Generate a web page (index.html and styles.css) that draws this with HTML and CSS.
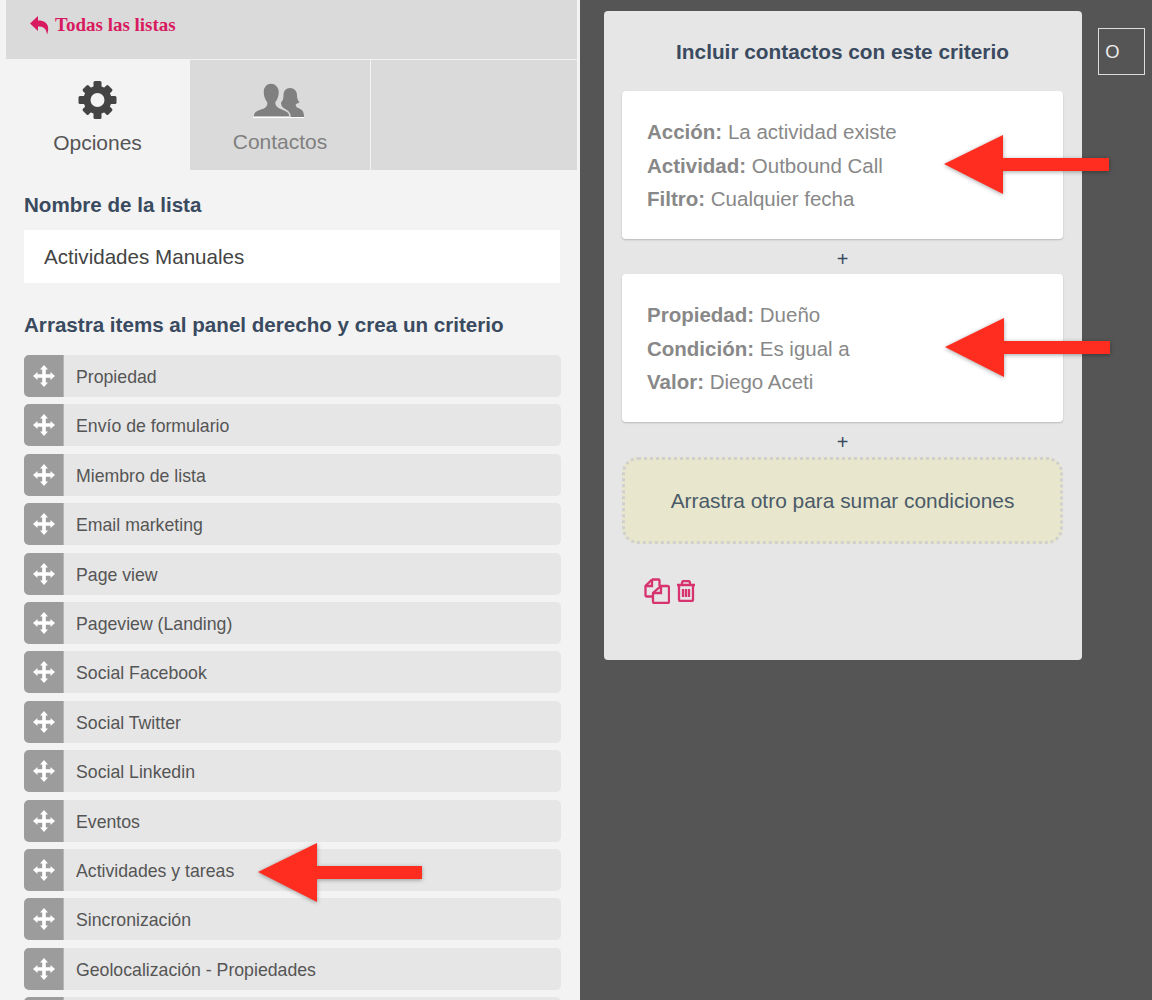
FILE: index.html
```html
<!DOCTYPE html>
<html lang="en">
<head>
    <meta charset="UTF-8">
    <meta name="viewport" content="width=device-width, initial-scale=1.0">
    <title>Actividades Manuales</title>
    <link rel="stylesheet" href="styles.css">
</head>
<body>
    <svg class="icon-defs">
        <symbol id="move" viewBox="0 0 22 22"><path d="M11 0 L15 4.500 H12.800 V9.200 H17.500 V7 L22 11 L17.500 15 V12.800 H12.800 V17.500 H15 L11 22 L7 17.500 H9.200 V12.800 H4.500 V15 L0 11 L4.500 7 V9.200 H9.200 V4.500 H7 Z"/></symbol>
    </svg>

    <div class="left-panel">
        <div class="back-bar">
            <a class="back-link" href="#">
                <svg class="back-icon" viewBox="0 0 20 20"><path d="M8 1 L0 8.500 L8 16 V11.500 C13 11.500 16 12.500 17 19.500 C20.500 10 16 5.500 8 5.500 Z"/></svg>
                Todas las listas
            </a>
        </div>

        <div class="tabs">
            <div class="tab active">
                <svg class="tab-icon gear" viewBox="0 0 38 38">
                    <g fill="#444">
                        <rect x="15" y="0" width="8" height="38" rx="1.500"/>
                        <rect x="0" y="15" width="38" height="8" rx="1.500"/>
                        <rect x="15" y="1" width="8" height="36" rx="1.500" transform="rotate(45 19 19)"/>
                        <rect x="15" y="1" width="8" height="36" rx="1.500" transform="rotate(-45 19 19)"/>
                    </g>
                    <circle cx="19" cy="19" r="10.500" fill="none" stroke="#444" stroke-width="7"/>
                    <circle cx="19" cy="19" r="7" fill="#f3f3f3"/>
                </svg>
                <span>Opciones</span>
            </div>
            <div class="tab">
                <svg class="tab-icon people" viewBox="0 0 51 35">
                    <path fill="#808080" d="M37 5 C33 5 30.500 8 30.500 12 C30.500 15 30 18 28 19.500 C28 22 29 24 31 25.200 L35 28 L37 34 H51 C51 28 49 26.500 45 25 C42.500 24 42.500 22 43 21 C45 20.500 46 19.500 46.500 19 C44.500 17.500 44 15 44 12 C44 8 41 5 37 5 Z"/>
                    <path fill="#808080" stroke="#dadada" stroke-width="1.500" d="M18 0 C13 0 10 4 10 9 C10 13 11.500 17 13.500 19.500 C14 22 13 23.500 10 25 C4 27 0 28 0 34 H37 C37 29.500 35 28 28.500 25.500 C24 24 23 22.500 23 19.500 C25 17 26.500 13 26.500 9 C26.500 4 23 0 18 0 Z"/>
                    <rect x="0" y="34" width="51" height="1" fill="#fff"/>
                </svg>
                <span>Contactos</span>
            </div>
            <div class="tab"></div>
        </div>

        <div class="options">
            <h3 class="section-title">Nombre de la lista</h3>
            <div class="name-input">Actividades Manuales</div>
            <h3 class="section-title drag-title">Arrastra items al panel derecho y crea un criterio</h3>

            <div class="drag-list">
                <div class="drag-item"><span class="handle"><svg><use href="#move"/></svg></span>Propiedad</div>
                <div class="drag-item"><span class="handle"><svg><use href="#move"/></svg></span>Envío de formulario</div>
                <div class="drag-item"><span class="handle"><svg><use href="#move"/></svg></span>Miembro de lista</div>
                <div class="drag-item"><span class="handle"><svg><use href="#move"/></svg></span>Email marketing</div>
                <div class="drag-item"><span class="handle"><svg><use href="#move"/></svg></span>Page view</div>
                <div class="drag-item"><span class="handle"><svg><use href="#move"/></svg></span>Pageview (Landing)</div>
                <div class="drag-item"><span class="handle"><svg><use href="#move"/></svg></span>Social Facebook</div>
                <div class="drag-item"><span class="handle"><svg><use href="#move"/></svg></span>Social Twitter</div>
                <div class="drag-item"><span class="handle"><svg><use href="#move"/></svg></span>Social Linkedin</div>
                <div class="drag-item"><span class="handle"><svg><use href="#move"/></svg></span>Eventos</div>
                <div class="drag-item"><span class="handle"><svg><use href="#move"/></svg></span>Actividades y tareas</div>
                <div class="drag-item"><span class="handle"><svg><use href="#move"/></svg></span>Sincronización</div>
                <div class="drag-item"><span class="handle"><svg><use href="#move"/></svg></span>Geolocalización - Propiedades</div>
                <div class="drag-item"><span class="handle"></span></div>
            </div>
        </div>
    </div>

    <div class="criteria-panel">
        <h3 class="criteria-title">Incluir contactos con este criterio</h3>

        <div class="rule-card">
            <div><b>Acción:</b> La actividad existe</div>
            <div><b>Actividad:</b> Outbound Call</div>
            <div><b>Filtro:</b> Cualquier fecha</div>
        </div>
        <div class="plus">+</div>
        <div class="rule-card">
            <div><b>Propiedad:</b> Dueño</div>
            <div><b>Condición:</b> Es igual a</div>
            <div><b>Valor:</b> Diego Aceti</div>
        </div>
        <div class="plus">+</div>
        <div class="drop-zone">Arrastra otro para sumar condiciones</div>

        <div class="card-actions">
            <svg class="copy-icon" viewBox="0 0 26 26">
                <path d="M8 1.500 H14.500 Q15.500 1.500 15.500 2.500 V8 M8 1.500 L1.500 8 V17 Q1.500 18.500 3 18.500 H9"/>
                <path d="M8 1.500 V8 H1.500"/>
                <path d="M17 8 H23.500 Q25 8 25 9.500 V23.500 Q25 25 23.500 25 H10.500 Q9 25 9 23.500 V15 Z"/>
                <path d="M17 8 V15 H9"/>
            </svg>
            <svg class="trash-icon" viewBox="0 0 20 22">
                <path d="M1 5 H19 M3 5 V19.500 Q3 21 4.500 21 H15.500 Q17 21 17 19.500 V5 M6 5 V3 Q6 1 8 1 H12 Q14 1 14 3 V5 M7 9 V17 M10 9 V17 M13 9 V17"/>
            </svg>
        </div>
    </div>

    <div class="mini-box">O</div>

    <!-- annotation arrows -->
    <svg class="arrow arrow-one" viewBox="0 0 170 62"><polygon points="1,30 60,1 60,24 166,24 166,37 60,37 60,60"/></svg>
    <svg class="arrow arrow-two" viewBox="0 0 170 62"><polygon points="1,30 60,1 60,24 166,24 166,37 60,37 60,60"/></svg>
    <svg class="arrow arrow-three" viewBox="0 0 170 62"><polygon points="1,30 60,1 60,24 165,24 165,37 60,37 60,60"/></svg>
</body>
</html>
```

FILE: styles.css
```css
* {
    margin: 0;
    padding: 0;
    box-sizing: border-box;
}

body {
    font-family: 'Liberation Sans', Arial, sans-serif;
    background: #555;
    color: #555;
    height: 1000px;
    display: flex;
    align-items: flex-start;
    overflow: hidden;
    position: relative;
}

.icon-defs {
    display: none;
}

.left-panel {
    width: 580px;
    height: 1000px;
    padding-left: 6px;
    background: #f3f3f3;
    flex-shrink: 0;
    overflow: hidden;
}

.back-bar {
    height: 59px;
    background: #dadada;
    padding: 14px 0 0 24px;
    margin-right: 3px;
}

.back-link {
    display: flex;
    align-items: center;
    gap: 5px;
    font-family: 'Liberation Serif', serif;
    font-weight: bold;
    font-size: 19px;
    color: #d81b60;
    text-decoration: none;
}

.back-icon {
    width: 20px;
    height: 20px;
    fill: #d81b60;
}

.tabs {
    display: flex;
    gap: 1px;
    height: 111px;
    margin-right: 3px;
    padding-top: 1px;
    background: #f3f3f3;
}

.tab {
    width: 180px;
    background: #dadada;
    color: #808080;
    font-size: 21px;
    display: flex;
    flex-direction: column;
    align-items: center;
}

.tab:first-child {
    width: 183px;
}

.tab:last-child {
    flex: 1;
}

.tab.active {
    background: #f3f3f3;
    color: #555;
}

.tab-icon.gear {
    width: 39px;
    height: 38px;
    margin-top: 21px;
}

.tab-icon.people {
    width: 51px;
    height: 35px;
    margin: 23px 4px 0 0;
}

.tab span {
    margin-top: 12px;
}

.options {
    padding: 23px 19px 0 18px;
}

.section-title {
    font-size: 20.600px;
    font-weight: bold;
    color: #3a4a5f;
}

.name-input {
    height: 53px;
    margin: 13px 1px 0 0;
    padding-left: 20px;
    background: #fff;
    color: #444;
    font-size: 20.600px;
    line-height: 53px;
}

.drag-title {
    margin-top: 30px;
}

.drag-list {
    margin-top: 18px;
    display: flex;
    flex-direction: column;
    gap: 7.400px;
}

.drag-item {
    height: 42px;
    flex-shrink: 0;
    background: #e6e6e6;
    border-radius: 5px;
    display: flex;
    align-items: flex-start;
    color: #555;
    font-size: 17.700px;
    line-height: 44px;
}

.handle {
    width: 40px;
    height: 42px;
    margin-right: 12px;
    background: #9c9c9c;
    border-right: 1px solid #b5b5b5;
    border-radius: 5px 0 0 5px;
    display: flex;
    align-items: center;
    justify-content: center;
}

.handle svg {
    width: 22px;
    height: 22px;
    fill: #fff;
}

.criteria-panel {
    width: 478px;
    height: 649px;
    margin: 11px 0 0 24px;
    padding: 0 19px 0 18px;
    background: #e6e6e6;
    border-radius: 4px;
    flex-shrink: 0;
}

.criteria-title {
    height: 80px;
    padding-top: 29px;
    text-align: center;
    font-size: 20.800px;
    color: #3a4a5f;
}

.rule-card {
    height: 148px;
    padding: 24px 24px 0 25px;
    background: #fff;
    border-radius: 4px;
    box-shadow: 0 1px 2px rgba(0, 0, 0, 0.2);
    color: #888;
    font-size: 20.500px;
    line-height: 33.500px;
}

.plus {
    height: 35px;
    text-align: center;
    color: #3a4a5f;
    font-size: 20px;
    font-weight: 300;
    line-height: 41px;
}

.drop-zone {
    height: 87px;
    background: #e8e6cc;
    border: 3px dotted #d0d0d0;
    border-radius: 16px;
    text-align: center;
    color: #4a5a68;
    font-size: 20.900px;
    line-height: 82px;
}

.card-actions {
    display: flex;
    align-items: center;
    gap: 6px;
    margin: 34px 0 0 22px;
}

.copy-icon,
.trash-icon {
    fill: none;
    stroke: #d6336f;
    stroke-width: 2.300;
}

.copy-icon {
    width: 26px;
    height: 26px;
}

.trash-icon {
    width: 20px;
    height: 22px;
}

.mini-box {
    width: 47px;
    height: 47px;
    margin: 28px 0 0 16px;
    padding-left: 6px;
    border: 1px solid #ddd;
    color: #eee;
    font-family: 'Open Sans', sans-serif;
    font-size: 19px;
    line-height: 45px;
    flex-shrink: 0;
}

.arrow {
    position: absolute;
    width: 170px;
    height: 62px;
    fill: #ff2d20;
    filter: drop-shadow(0 1px 2px rgba(0, 0, 0, 0.35));
}

.arrow-one {
    left: 943px;
    top: 134px;
}

.arrow-two {
    left: 944px;
    top: 317px;
}

.arrow-three {
    left: 257px;
    top: 842px;
}
```
